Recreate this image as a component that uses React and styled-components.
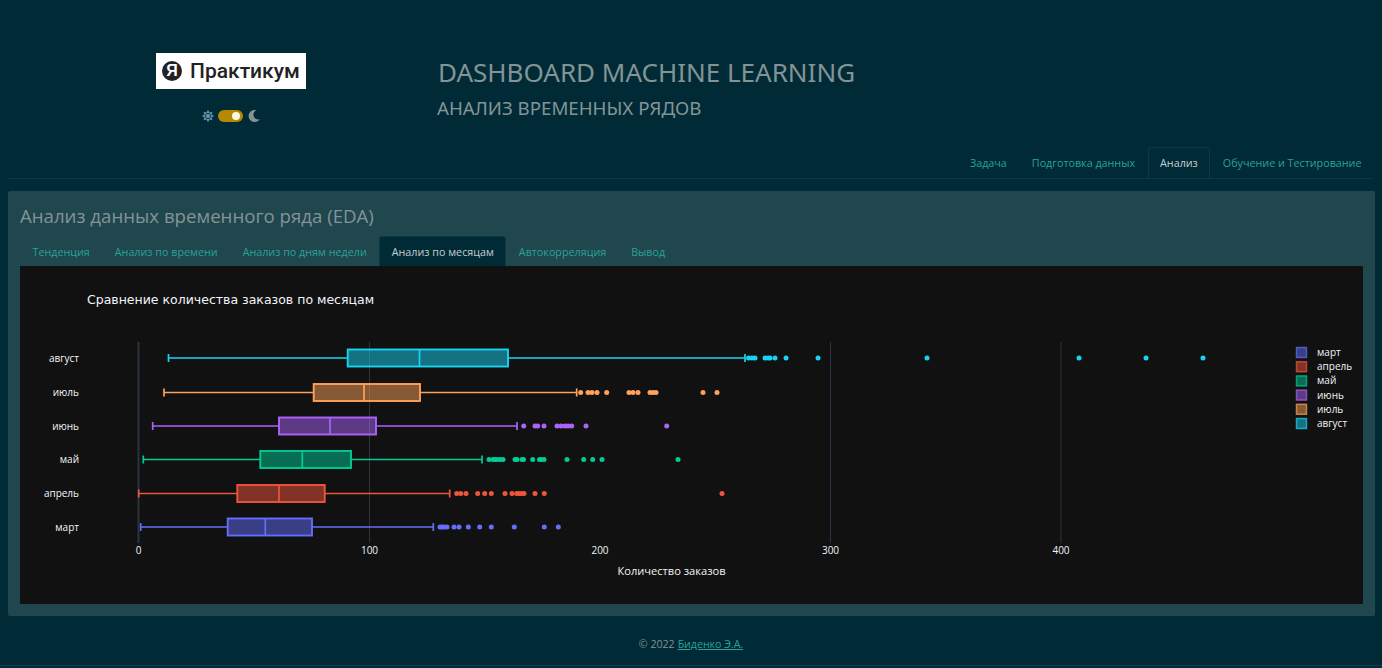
import React from 'react';
import styled, { createGlobalStyle } from 'styled-components';
import { FaSun, FaMoon } from 'react-icons/fa';

const GlobalStyle = createGlobalStyle`
  html, body {
    margin: 0;
    padding: 0;
    background: #002b36;
    font-family: "Open Sans", "Noto Sans", sans-serif;
    color: #839496;
    overflow: hidden;
  }
`;

const Page = styled.div`
  width: 1382px;
  height: 668px;
  display: flex;
  flex-direction: column;
`;

const Header = styled.header`
  height: 147px;
  display: flex;
  flex-shrink: 0;
`;

const Brand = styled.div`
  width: 414px;
  margin-left: 24px;
  padding-top: 53px;
  display: flex;
  flex-direction: column;
  align-items: center;
`;

const LogoBox = styled.div`
  width: 150px;
  height: 36px;
  background: #fff;
  display: flex;
  align-items: center;
  padding-left: 6px;
  gap: 8px;
  box-sizing: border-box;
`;

const LogoMark = styled.span`
  width: 20px;
  height: 20px;
  border-radius: 50%;
  background: #222;
  color: #fff;
  font: 700 16px/20px "Liberation Sans", sans-serif;
  text-align: center;
`;

const LogoText = styled.span`
  color: #222;
  font: 500 21px/36px Roboto, sans-serif;
`;

const ThemeSwitch = styled.div`
  margin-top: 21px;
  display: flex;
  align-items: center;
  gap: 4px;
  font-size: 12px;
`;

const SunIcon = styled(FaSun)`
  color: #5f8ea6;
`;

const MoonIcon = styled(FaMoon)`
  color: #839496;
  margin-left: 1px;
`;

const Pill = styled.span`
  width: 25px;
  height: 12px;
  border-radius: 6px;
  background: #b58900;
  display: flex;
  align-items: center;
  justify-content: flex-end;
  padding-right: 3px;
  box-sizing: border-box;
`;

const Knob = styled.span`
  width: 8px;
  height: 8px;
  border-radius: 50%;
  background: #fdf6e3;
`;

const Titles = styled.div`
  padding-top: 52px;
`;

const Title = styled.h1`
  margin: 0;
  font: 400 26px/40px "Noto Sans", sans-serif;
  color: #839496;
`;

const Subtitle = styled.h2`
  margin: 0 0 0 -1px;
  font: 400 18.7px/32px "Noto Sans", sans-serif;
  color: #839496;
`;

const Nav = styled.nav`
  height: 31px;
  margin: 0 8px;
  border-bottom: 1px solid #0a3a46;
  display: flex;
  justify-content: flex-end;
  flex-shrink: 0;
`;

const Tab = styled.a`
  box-sizing: border-box;
  height: ${p => p.$h}px;
  padding: 0 11.5px;
  display: flex;
  align-items: center;
  font-size: 10.75px;
  white-space: nowrap;
  color: ${p => (p.$active ? '#c5ced0' : '#2aa198')};
  background: ${p => (p.$active ? '#002b36' : 'transparent')};
  border: 1px solid ${p => (p.$active ? '#0a3a46' : 'transparent')};
  border-bottom: none;
  border-radius: 3px 3px 0 0;
`;

const Card = styled.section`
  margin: 12px 7px 0 8px;
  height: 425px;
  background: #20464e;
  border-radius: 2px;
  padding: 0 12px;
  display: flex;
  flex-direction: column;
  box-sizing: border-box;
  flex-shrink: 0;
`;

const CardTitle = styled.h3`
  margin: 0;
  height: 45px;
  font: 400 18.65px/49px "Open Sans", sans-serif;
  color: #839496;
`;

const CardTabs = styled.div`
  display: flex;
  height: 30px;
  flex-shrink: 0;
`;

const Graph = styled.div`
  height: 338px;
  background: #111111;
`;

const Footer = styled.footer`
  flex: 1;
  margin-bottom: 2px;
  border-bottom: 1px solid #0e404c;
  display: flex;
  justify-content: center;
  padding-top: 20px;
  font-size: 10.6px;
  line-height: 16px;
  color: #839496;
`;

const FooterLink = styled.a`
  color: #2aa198;
  text-decoration: underline;
  margin-left: 3px;
`;

const ChartText = styled.text`
  fill: ${p => p.$fill || '#f2f5fa'};
  font-family: ${p => p.$family || '"Open Sans"'}, sans-serif;
  font-size: ${p => p.$size || 10}px;
  text-anchor: ${p => p.$anchor || 'start'};
`;

// chart coordinates are relative to the Graph block (origin 20, 266)
const OX = 20;
const OY = 266;

const series = [
  { name: 'март', color: '#636efa', y: 527, cap: [140.7, 433.3], box: [227.7, 265.3, 312],
    pts: [440, 442, 444, 447, 454, 459, 468.3, 479.7, 491.3, 514.3, 544.3, 558.3] },
  { name: 'апрель', color: '#ef553b', y: 493.5, cap: [138.7, 449.7], box: [237.3, 279, 324.7],
    pts: [456.7, 460.7, 466, 477.7, 484.7, 491.3, 505, 512, 516.7, 519, 521.7, 524, 535, 544.3, 722] },
  { name: 'май', color: '#00cc96', y: 459.5, cap: [143.3, 482], box: [260.3, 302.3, 351],
    pts: [489, 493, 495, 497, 500, 503, 515, 517, 522, 523.5, 532.7, 539.5, 541, 544, 567, 583.7, 592.7, 602, 678] },
  { name: 'июнь', color: '#ab63fa', y: 426, cap: [152.7, 517], box: [279, 330, 376],
    pts: [523.7, 535, 537.7, 544, 557, 561, 565, 568, 571.7, 586, 666.7] },
  { name: 'июль', color: '#ffa15a', y: 392.5, cap: [164, 576.7], box: [313.7, 364, 420],
    pts: [580.7, 588, 592, 597, 606.7, 629, 633, 638, 650, 653, 656, 703, 717] },
  { name: 'август', color: '#19d3f3', y: 358, cap: [168.5, 745], box: [347.7, 419.5, 508],
    pts: [748.5, 752, 755, 765, 768, 770, 775, 786, 818, 927, 1079, 1146, 1203] },
];

const ticks = [
  { x: 138.5, label: '0' },
  { x: 369.5, label: '100' },
  { x: 600, label: '200' },
  { x: 830.5, label: '300' },
  { x: 1061, label: '400' },
];

const BoxTrace = ({ s }) => {
  const [capL, capR] = s.cap;
  const [q1, med, q3] = s.box;
  const y = s.y;
  return (
    <g stroke={s.color} fill="none">
      <path d={`M${capL} ${y - 4}V${y + 4}M${capR} ${y - 4}V${y + 4}M${capL} ${y}H${q1}M${q3} ${y}H${capR}`} strokeWidth="1.7" />
      <rect x={q1} y={y - 8.5} width={q3 - q1} height={17} fill={s.color} fillOpacity="0.5" strokeWidth="1.9" />
      <path d={`M${med} ${y - 8.5}V${y + 8.5}`} strokeWidth="1.7" />
      {s.pts.map(x => (
        <circle key={x} cx={x} cy={y} r="2.5" fill={s.color} stroke="none" />
      ))}
    </g>
  );
};

const Chart = () => (
  <svg width="1343" height="338" viewBox={`${OX} ${OY} 1343 338`} style={{ display: 'block' }}>
    {[369.5, 830.5, 1061].map(x => (
      <path key={x} d={`M${x} 342V543`} stroke="#283442" strokeWidth="1" />
    ))}
    <path d="M138.5 342V543" stroke="#283442" strokeWidth="2" />
    {series.map(s => (
      <BoxTrace key={s.name} s={s} />
    ))}
    <ChartText x="87" y="304" $size={12.5} $family='"DejaVu Sans"'>Сравнение количества заказов по месяцам</ChartText>
    {series.map(s => (
      <ChartText key={s.name} x="79" y={s.y + 3.5} $anchor="end">{s.name}</ChartText>
    ))}
    {ticks.map(t => (
      <ChartText key={t.label} x={t.x} y="554" $anchor="middle">{t.label}</ChartText>
    ))}
    <ChartText x="671.5" y="575" $anchor="middle" $size={11.1}>Количество заказов</ChartText>
    {series.map((s, i) => (
      <g key={s.name}>
        <rect x="1296.5" y={347.5 + i * 14.2} width="10" height="10" fill={s.color} fillOpacity="0.5" stroke={s.color} strokeOpacity="0.7" strokeWidth="1.5" />
        <ChartText x="1317" y={356 + i * 14.2}>{s.name}</ChartText>
      </g>
    ))}
  </svg>
);

const topTabs = ['Задача', 'Подготовка данных', 'Анализ', 'Обучение и Тестирование'];
const cardTabs = ['Тенденция', 'Анализ по времени', 'Анализ по дням недели', 'Анализ по месяцам', 'Автокорреляция', 'Вывод'];

const App = () => (
  <Page>
    <GlobalStyle />
    <Header>
      <Brand>
        <LogoBox>
          <LogoMark>Я</LogoMark>
          <LogoText>Практикум</LogoText>
        </LogoBox>
        <ThemeSwitch>
          <SunIcon />
          <Pill><Knob /></Pill>
          <MoonIcon />
        </ThemeSwitch>
      </Brand>
      <Titles>
        <Title>DASHBOARD MACHINE LEARNING</Title>
        <Subtitle>АНАЛИЗ ВРЕМЕННЫХ РЯДОВ</Subtitle>
      </Titles>
    </Header>
    <Nav>
      {topTabs.map(t => (
        <Tab key={t} $h={31} $active={t === 'Анализ'}>{t}</Tab>
      ))}
    </Nav>
    <Card>
      <CardTitle>Анализ данных временного ряда (EDA)</CardTitle>
      <CardTabs>
        {cardTabs.map(t => (
          <Tab key={t} $h={30} $active={t === 'Анализ по месяцам'}>{t}</Tab>
        ))}
      </CardTabs>
      <Graph>
        <Chart />
      </Graph>
    </Card>
    <Footer>
      <span>© 2022</span>
      <FooterLink>Биденко Э.А.</FooterLink>
    </Footer>
  </Page>
);

export default App;
